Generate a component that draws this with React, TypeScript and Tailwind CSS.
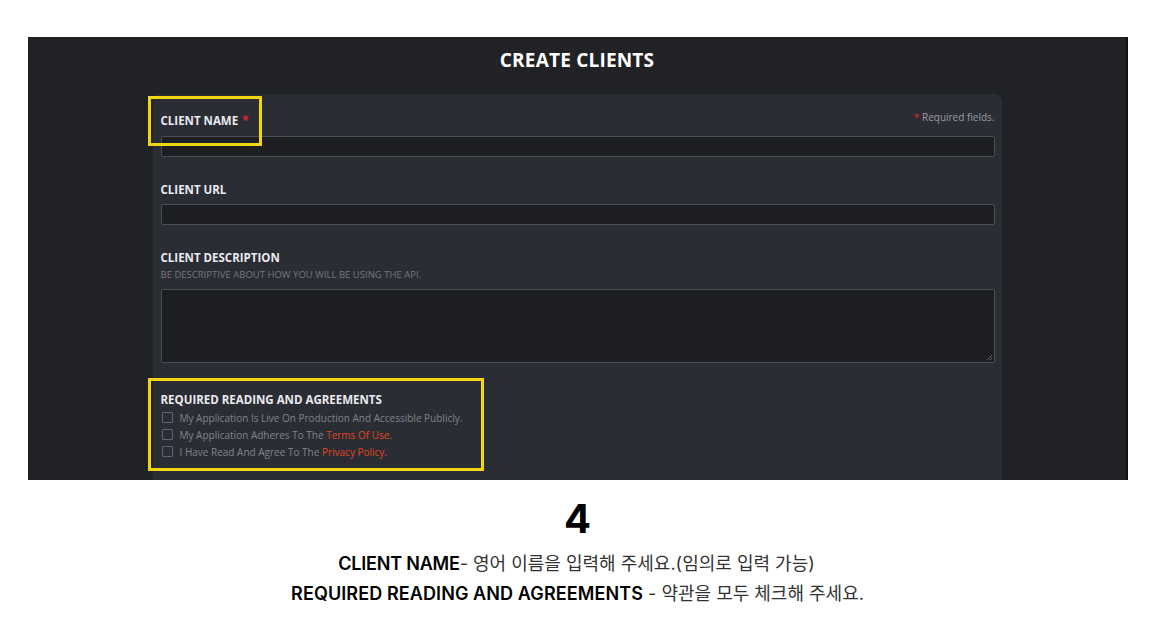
import React from 'react';

const checks = [
  { text: 'My Application Is Live On Production And Accessible Publicly.', link: '' },
  { text: 'My Application Adheres To The ', link: 'Terms Of Use.' },
  { text: 'I Have Read And Agree To The ', link: 'Privacy Policy.' },
];

function Field({ label, required }: { label: string; required?: boolean }) {
  return (
    <div>
      <p className="text-[11.5px] font-bold text-[#e9eaee] leading-none">
        {label}
        {required && <span className="text-[#e0262b] ml-1">*</span>}
      </p>
    </div>
  );
}

export default function App() {
  return (
    <div className="min-h-[625px] bg-white pt-[37px]" style={{ fontFamily: '"Open Sans", "Noto Sans", sans-serif' }}>
      <div className="mx-[28px] w-[1100px] h-[443px] bg-[#212226] border-r-2 border-r-[#111] overflow-hidden flex flex-col items-center">
        <h1 className="mt-[11px] text-[19px] font-bold text-white tracking-[0.2px] leading-[24px]">CREATE CLIENTS</h1>

        <div className="relative mt-[22px] w-[849px] flex-1 bg-[#2b2d35] rounded-t-[7px] pl-[8px] pr-[7px] pt-[21px]">
          <div className="absolute left-[-5px] top-[2px] w-[114px] h-[50px] border-[3px] border-[#f2d60f]" />
          <div className="absolute left-[-5px] top-[284px] w-[336px] h-[93px] border-[3px] border-[#f2d60f]" />

          <div className="flex justify-between items-start">
            <Field label="CLIENT NAME" required />
            <p className="text-[10px] text-[#9a9ca4] -mt-[5px]">
              <span className="text-[#e0262b]">*</span> Required fields.
            </p>
          </div>
          <div className="mt-[9px] h-[21px] w-full bg-[#1c1e22] border border-[#4b4e56] rounded-[2px]" />

          <div className="mt-[27px]">
            <Field label="CLIENT URL" />
          </div>
          <div className="mt-[9px] h-[21px] w-full bg-[#1c1e22] border border-[#4b4e56] rounded-[2px]" />

          <div className="mt-[27px]">
            <Field label="CLIENT DESCRIPTION" />
          </div>
          <p className="mt-[6px] text-[9.5px] text-[#747780] leading-none">BE DESCRIPTIVE ABOUT HOW YOU WILL BE USING THE API.</p>
          <div className="relative mt-[10px] h-[74px] w-full bg-[#1c1e22] border border-[#4b4e56] rounded-[2px]">
            <svg className="absolute right-[1px] bottom-[1px]" width="7" height="7" viewBox="0 0 7 7">
              <path d="M6 1 L1 6 M6 4 L4 6" stroke="#6a6d75" strokeWidth="1" />
            </svg>
          </div>

          <div className="mt-[31px]">
            <Field label="REQUIRED READING AND AGREEMENTS" />
          </div>
          <div className="mt-[6px] flex flex-col gap-[5px]">
            {checks.map((c) => (
              <div key={c.text} className="flex items-center gap-[7px] h-[12px]">
                <span className="w-[11px] h-[11px] border border-[#60636b] rounded-[1px] ml-[1px]" />
                <span className="text-[10px] text-[#80838b] leading-none">
                  {c.text}
                  {c.link && <span className="text-[#e0461e]">{c.link}</span>}
                </span>
              </div>
            ))}
          </div>
        </div>
      </div>

      <div className="flex flex-col items-center text-black" style={{ fontFamily: 'Inter, "Noto Sans CJK KR", sans-serif' }}>
        <p className="mt-[15px] text-[40px] font-bold leading-[48px] ml-[6px]">4</p>
        <p className="mt-[6px] text-[18px] leading-[30px] ml-[4px]">
          <span className="font-semibold tracking-[-0.2px]">CLIENT NAME</span>
          <span className="text-[#333]">- 영어 이름을 입력해 주세요.(임의로 입력 가능)</span>
        </p>
        <p className="text-[18px] leading-[30px] ml-[6px]">
          <span className="font-semibold tracking-[0.1px]">REQUIRED READING AND AGREEMENTS</span>
          <span className="text-[#333]"> - 약관을 모두 체크해 주세요.</span>
        </p>
      </div>
    </div>
  );
}
